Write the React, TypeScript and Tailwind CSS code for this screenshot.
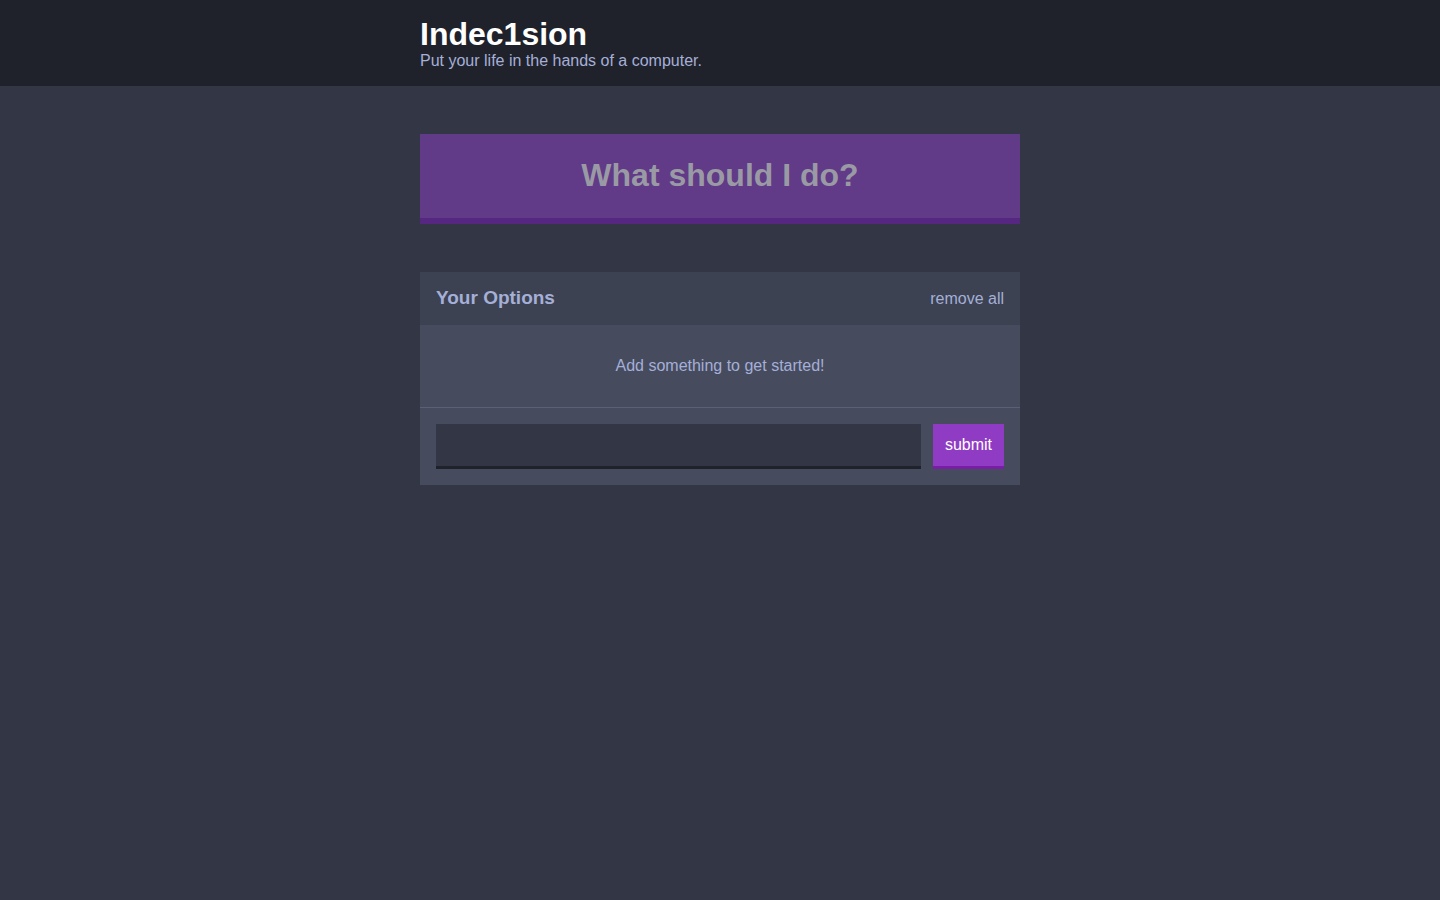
import { useState } from 'react'

export default function App() {
  const [options, setOptions] = useState<string[]>([])
  const [value, setValue] = useState('')

  function addOption(event: React.FormEvent) {
    event.preventDefault()
    const next = value.trim()
    if (!next) return
    setOptions((prev) => [...prev, next])
    setValue('')
  }

  return (
    <div className="min-h-screen bg-[#333745] font-['Liberation_Sans',Arial,sans-serif]">
      <header className="h-[86px] bg-[#20222b]">
        <div className="mx-auto w-[600px] pt-[16px]">
          <h1 className="text-[32px] font-bold leading-[36px] text-white">Indec1sion</h1>
          <h2 className="text-[16px] leading-[18px] text-[#a5afd7]">Put your life in the hands of a computer.</h2>
        </div>
      </header>

      <main className="mx-auto w-[600px] pt-12">
        <button
          type="button"
          disabled={options.length === 0}
          className="block h-[90px] w-full border-b-[6px] border-[#552780] bg-[#613a88] pb-[2px] text-[32px] font-bold text-[#9a9aa4]"
        >
          What should I do?
        </button>

        <section className="mt-12 bg-[#464b5e]">
          <div className="flex h-[53px] items-center justify-between bg-[#3c4251] px-4">
            <h3 className="text-[19px] font-bold text-[#a5afd7]">Your Options</h3>
            <button
              type="button"
              onClick={() => setOptions([])}
              className="text-[16px] text-[#a5afd7]"
            >
              remove all
            </button>
          </div>

          {options.length === 0 ? (
            <p className="flex h-[83px] items-center justify-center border-b border-[#5b6078] text-[16px] text-[#a5afd7]">
              Add something to get started!
            </p>
          ) : (
            <ul className="border-b border-[#5b6078]">
              {options.map((option, index) => (
                <li key={`${option}-${index}`} className="px-4 py-6 text-[16px] text-white">
                  {index + 1}. {option}
                </li>
              ))}
            </ul>
          )}

          <form onSubmit={addOption} className="flex gap-3 p-4">
            <input
              value={value}
              onChange={(event) => setValue(event.target.value)}
              className="h-[45px] flex-1 border-b-[3px] border-[#20222b] bg-[#333745] px-3 text-white outline-none"
            />
            <button
              type="submit"
              className="h-[45px] w-[71px] border-b-[3px] border-[#7a1ea8] bg-[#8f3bc4] text-[16px] text-white"
            >
              submit
            </button>
          </form>
        </section>
      </main>
    </div>
  )
}
